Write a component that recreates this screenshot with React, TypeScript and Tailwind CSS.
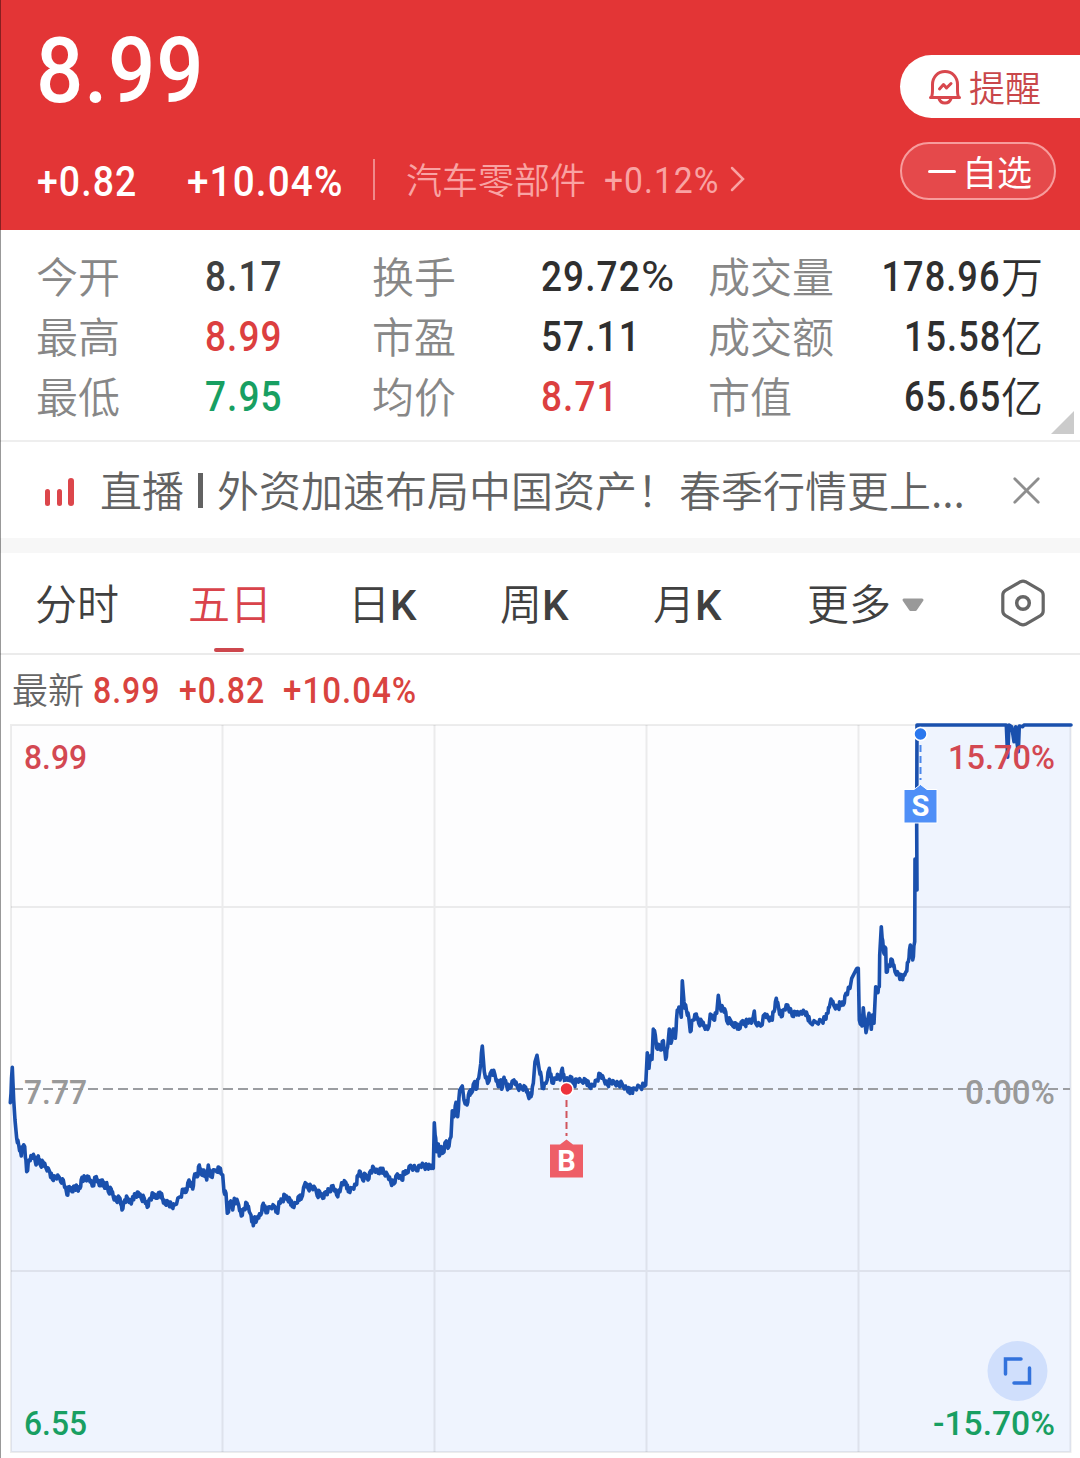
import { X } from "lucide-react";

const stats = [
  { label: "今开", value: "8.17", color: "text-[#404040]" },
  { label: "换手", value: "29.72", percent: true, color: "text-[#2f2f2f]" },
  { label: "成交量", value: "178.96", unit: "万", color: "text-[#2f2f2f]" },
  { label: "最高", value: "8.99", color: "text-[#dc3f3f]" },
  { label: "市盈", value: "57.11", color: "text-[#2f2f2f]" },
  { label: "成交额", value: "15.58", unit: "亿", color: "text-[#2f2f2f]" },
  { label: "最低", value: "7.95", color: "text-[#189f62]" },
  { label: "均价", value: "8.71", color: "text-[#dc3f3f]" },
  { label: "市值", value: "65.65", unit: "亿", color: "text-[#2f2f2f]" },
];

const tabs = [
  { name: "分时", width: "w-[153px]" },
  { name: "五日", width: "w-[160px]", active: true },
  { name: "日", k: true, width: "w-[152px]" },
  { name: "周", k: true, width: "w-[153px]" },
  { name: "月", k: true, width: "w-[154px]" },
];

// every part is sampled on a grid of 1/3 px, counted from its own origin
const parts = [
  {
    x: 0,
    y: 1050,
    points:
      "31,158 37,52 41,150 45,210 50,265 56,285 64,318 66,290 74,290 80,365 88,330 96,318 103,320 108,345 115,318 121,345 130,337 137,352 149,365 157,388 166,380 178,382 182,395 190,390 201,435 208,410 216,425 224,408 232,418 240,415 246,382 256,390 266,380 277,408 289,380 298,407 307,390 314,415 320,398 325,425 334,418 340,440 347,450 360,445 366,480 374,450 383,445 394,462 398,440 407,440 415,427 424,445 433,445 442,472 450,445 461,432 468,445 480,427 488,448 495,462 505,455 516,472 524,465 540,440 552,418 558,427 567,390 578,417 584,372 592,380 598,345 605,375 612,360 620,390 625,345 632,380 645,360 650,365 657,352 664,372",
  },
  {
    x: 220,
    y: 1040,
    points:
      "8,405 12,455 18,460 22,520 32,483 38,510 43,475 56,495 64,528 72,505 81,490 88,515 93,525 100,557 104,530 108,547 113,530 122,525 130,490 138,518 150,500 165,500 173,520 177,485 187,482 195,465 203,480 210,478 217,500 230,490 237,468 243,478 256,428 264,445 274,440 287,448 292,468 299,455 308,475 318,455 328,455 339,437 350,465 360,455 365,428 378,428 385,455 398,445 408,435 414,405 421,395 428,420 436,402 444,420 452,392 462,385 475,400 484,385 492,400 503,405 512,425 521,432 532,402 546,420 552,395 560,400 572,376 590,392 600,376 612,376 622,384 630,376 640,385 643,248 650,335 655,312 658,348 664,320 668,340 679,303 684,325 693,290 697,212 702,230 708,187 713,230 719,150",
  },
  {
    x: 430,
    y: 1030,
    points:
      "97,168 102,210 111,225 118,185 124,190 134,155 138,178 146,145 150,118 157,48 163,125 173,160 185,122 195,135 205,170 212,150 215,178 222,142 230,168 238,175 252,150 262,170 275,175 287,172 294,195 303,200 310,160 315,95 321,76 328,120 334,140 337,175 348,160 358,115 366,158 378,145 385,135 390,150 397,115 404,155 415,150 425,142 432,168 440,148 455,155 468,150 478,170 490,168 500,150 511,132 522,150 533,165 541,152 555,162 565,160 578,165 592,180 598,178 604,188 614,175 630,170 644,168",
  },
  {
    x: 630,
    y: 960,
    points:
      "47,375 52,278 57,325 60,288 66,298 70,207 76,225 80,265 88,255 92,270 100,242 107,298 113,260 118,207 123,250 130,207 136,235 142,150 150,145 154,172 157,62 162,125 170,155 176,170 181,215 188,180 199,162 206,190 216,185 222,198 233,208 237,198 241,162 250,178 260,160 265,106 270,142 280,148 287,155 290,182 302,182 308,198 320,192 326,208 338,182 345,195 352,182 362,185 368,180 373,153 376,188 392,198 405,162 415,175 424,180 432,155 439,115 446,145 454,170 462,148 473,135 487,168 497,155 507,165 512,155 525,158 532,165 540,188 560,188 575,182 586,178 592,160 598,142 603,117 612,138 625,145 631,128 640,135 648,100 660,85 665,55 680,26",
  },
  {
    x: 840,
    y: 710,
    points:
      "52,775 55,775 58,930 66,948 70,893 78,968 87,910 94,958 97,915 102,940 107,830 112,848 118,830 119,735 124,650 131,728 137,715 139,787 147,765 157,750 165,785 177,795 185,807 194,795 198,785 205,755 211,705 218,750 224,695 225,447 231,540 230,350 231,45 499,45 503,142 507,45 515,50 522,95 527,50 530,92 535,125 538,48 548,50 552,45 693,45",
  },
];

// short segments get a small tick up and down, as the minute prices do
const withTicks = (points: number[][]) =>
  points.flatMap(([x, y], i) => {
    const next = points[i + 1];
    if (!next) return [[x, y]];
    const dx = next[0] - x;
    const dy = next[1] - y;
    if (dx < 6 || dx > 20 || y < 100) return [[x, y]];
    const size = i % 3 === 0 ? 9 : 6;
    return [
      [x, y],
      [x + dx * 0.35, y + dy * 0.35 + size],
      [x + dx * 0.6, y + dy * 0.6 - size],
    ];
  });

const line = parts
  .flatMap((part) =>
    withTicks(part.points.split(" ").map((point) => point.split(",").map(Number))).map(
      ([x, y]) => `${(part.x + x / 3).toFixed(1)},${(part.y + y / 3).toFixed(1)}`
    )
  )
  .join(" ");

const Num = ({ children, className = "" }: { children: string; className?: string }) => (
  <span
    className={`inline-block whitespace-nowrap font-['Roboto',sans-serif] font-medium ${className}`}
  >
    {children}
  </span>
);

const BellIcon = () => (
  <svg width="34" height="36" viewBox="0 0 34 36" fill="none" stroke="#d8474d" strokeWidth="3" strokeLinecap="round" strokeLinejoin="round">
    <path d="M2.500 28.500h29M3.500 28C4.500 26 4.500 24 4.500 20v-4.500C4.500 8 9.800 2.500 17 2.500S29.500 8 29.500 15.500V20c0 4 0 6 1 8" />
    <path d="M11 29.500c1 3.500 3.500 4.500 6 4.500s5-1 6-4.500" />
    <path d="M11.500 20l4-4.500 3 3.500 4.500-4.500" />
  </svg>
);

const Header = () => (
  <header className="h-[230px] bg-[#e33536] flex justify-between text-white">
    <div className="pl-[37px] flex flex-col">
      <div className="h-[134px] pt-[18px]">
        <Num className="origin-left -ml-px text-[91px] leading-[107px] tracking-[0.01em] scale-x-[0.915]">8.99</Num>
      </div>
      <div className="h-[94px] flex items-center">
        <Num className="w-[150px] pt-[2px] origin-left text-[42px] tracking-[0.03em] scale-x-[0.89]">+0.82</Num>
        <Num className="w-[186px] pt-[2px] origin-left text-[42px] tracking-[0.03em] scale-x-[0.92]">+10.04%</Num>
        <div className="w-[2px] h-[41px] bg-[#f08a8a] -mt-[4px]" />
        <div className="flex items-center pl-[31px] -mt-[4px] text-[#f9a3a3]">
          <span className="text-[36px] w-[198px] font-[350] -mt-[2px]">汽车零部件</span>
          <Num className="w-[126px] pt-[3px] origin-left text-[37px] tracking-[0.03em] scale-x-[0.91] !font-normal">+0.12%</Num>
          <svg width="16" height="26" viewBox="0 0 16 26" fill="none" stroke="currentColor" strokeWidth="2.500" strokeLinecap="round">
            <path d="M2 2l11 11L2 24" />
          </svg>
        </div>
      </div>
    </div>
    <div className="w-[180px] pt-[55px] flex flex-col gap-[24px] text-[36px]">
      <div className="h-[63px] bg-white rounded-l-full flex items-center pl-[28px] gap-[7px] text-[#c9474a]">
        <BellIcon />
        <span className="pb-[2px] font-[350]">提醒</span>
      </div>
      <div className="w-[156px] h-[58px] rounded-full border-2 border-[#f79c9c] bg-[#e5494b] flex items-center pl-[26px] gap-[6px]">
        <span className="w-[28px] h-[3px] rounded bg-white" />
        <span className="text-[35px] pb-[2px]">自选</span>
      </div>
    </div>
  </header>
);

const Stats = () => (
  <section className="relative h-[212px] pt-[16px] pl-[36px] pr-[37px] border-b-2 border-[#eeeeee] grid grid-cols-[168px_168px_168px_168px_335px] auto-rows-[60px] text-[42px]">
    {stats.map((item) =>
      item.unit ? (
        <div key={item.label} className="flex justify-between items-center">
          <span className="pb-[3px] font-[350] text-[#878787]">{item.label}</span>
          <span className={`flex items-center ${item.color}`}>
            <Num className="origin-right pt-[2px] tracking-[0.03em] scale-x-[0.86]">{item.value}</Num>
            <span className="pb-[3px] font-[350]">{item.unit}</span>
          </span>
        </div>
      ) : (
        <div key={item.label} className="col-span-2 flex items-center">
          <span className="w-[169px] pb-[3px] font-[350] text-[#878787]">{item.label}</span>
          <span className={`flex items-center ${item.color}`}>
            <Num className={`origin-left pt-[2px] tracking-[0.03em] scale-x-[0.88] ${item.percent ? "w-[100px]" : ""}`}>
              {item.value}
            </Num>
            {item.percent && <Num className="pt-[2px] origin-left scale-x-[1.08] scale-y-[1.02] !font-normal">%</Num>}
          </span>
        </div>
      )
    )}
    <svg className="absolute right-[6px] bottom-[6px]" width="23" height="23">
      <path d="M23 0V23H0Z" fill="#cbcbcb" />
    </svg>
  </section>
);

const News = () => (
  <section className="h-[96px] flex items-center pl-[45px] text-[42px] text-[#626262]">
    <div className="w-[55px] h-[29px] mt-[2px] flex items-end gap-[6px]">
      <span className="w-[5px] h-[17px] rounded-sm bg-[#dc464b]" />
      <span className="w-[5px] h-[17px] ml-[1px] rounded-sm bg-[#dc464b]" />
      <span className="w-[6px] h-[28px] rounded-sm bg-[#dc464b]" />
    </div>
    <span className="pb-[2px] font-[350]">直播</span>
    <span className="w-[5px] h-[35px] ml-[14px] mr-[14px] bg-[#626262]" />
    <span className="w-[795px] pb-[2px] whitespace-nowrap font-[350]">外资加速布局中国资产！春季行情更上...</span>
    <X size={47} strokeWidth={1.400} color="#8e8e8e" className="-ml-[9px]" />
  </section>
);

const Tabs = () => (
  <nav className="h-[102px] border-b-2 border-[#ebebeb] flex items-center pl-[35px] text-[42px] text-[#404040]">
    {tabs.map((tab) => (
      <div key={tab.name} className={`relative h-full flex items-center ${tab.width} ${tab.active ? "text-[#d9434b]" : ""}`}>
        <span className="pb-[2px] font-[350]">{tab.name}</span>
        {tab.k && <span className="pt-[5px] font-['Roboto',sans-serif] font-medium">K</span>}
        {tab.active && <span className="absolute left-[26px] bottom-[1px] w-[30px] h-[4px] rounded-full bg-[#cd474d]" />}
      </div>
    ))}
    <span className="w-[94px] pb-[2px] font-[350]">更多</span>
    <svg className="mt-[3px]" width="24" height="16" viewBox="0 0 24 16" fill="#999" stroke="#999" strokeWidth="3" strokeLinejoin="round">
      <path d="M3 3H21L14.500 12.500H9.500Z" />
    </svg>
    <svg className="ml-[74px]" width="48" height="48" viewBox="0 0 48 48" fill="none" stroke="#666" strokeWidth="3.200" strokeLinejoin="round">
      <path d="M21.500 2.700Q24 1.600 26.500 2.700L41.500 11.400Q44.200 13 44.200 16V32Q44.200 35 41.500 36.600L26.500 45.300Q24 46.400 21.500 45.300L6.500 36.600Q3.800 35 3.800 32V16Q3.800 13 6.500 11.400Z" />
      <circle cx="24" cy="24" r="6.300" strokeWidth="3.500" />
    </svg>
  </nav>
);

const Latest = () => (
  <div className="h-[69px] flex items-center pl-[12px] text-[36px] text-[#666666]">
    <span className="w-[81px] pb-[3px] font-[350]">最新</span>
    <Num className="origin-left w-[86px] pt-[2px] tracking-[0.03em] scale-x-[0.89] text-[#d9433f]">8.99</Num>
    <Num className="origin-left w-[104px] pt-[2px] tracking-[0.03em] scale-x-[0.89] text-[#d9433f]">+0.82</Num>
    <Num className="origin-left pt-[2px] tracking-[0.03em] scale-x-[0.92] text-[#d9433f]">+10.04%</Num>
  </div>
);

const Chart = () => (
  <svg
    className="block font-['Roboto',sans-serif]"
    width="1080"
    height="734"
    viewBox="0 724 1080 734"
    overflow="visible"
  >
    <rect x="11" y="725" width="1060" height="727" fill="#fdfdfe" />
    <polygon points={`${line} 1071,1452 11,1452`} fill="#eff4fe" />
    <g stroke="#000" strokeOpacity="0.07" strokeWidth="2">
      <rect x="11" y="725" width="1059.500" height="727" fill="none" />
      <path d="M222.500 725V1452M434.500 725V1452M646.500 725V1452M858.500 725V1452M11 907H1070M11 1271H1070" />
    </g>
    <path d="M14 1089H1070" stroke="#9b9da1" strokeWidth="2" strokeDasharray="10 5" strokeDashoffset="1" />
    <polyline points={line} fill="none" stroke="#1a50ad" strokeWidth="3.600" strokeLinejoin="round" strokeLinecap="round" />

    <g fontSize="33" fontWeight="500">
      <text x="24" y="769" fill="#d34852" textLength="63" lengthAdjust="spacingAndGlyphs">8.99</text>
      <text x="948" y="769" fill="#d34852" textLength="107" lengthAdjust="spacingAndGlyphs">15.70%</text>
      <text x="24" y="1104" fill="#999" textLength="63" lengthAdjust="spacingAndGlyphs">7.77</text>
      <text x="965" y="1104" fill="#999" textLength="90" lengthAdjust="spacingAndGlyphs">0.00%</text>
      <text x="24" y="1435" fill="#189f62" textLength="63" lengthAdjust="spacingAndGlyphs">6.55</text>
      <text x="933" y="1435" fill="#189f62" textLength="122" lengthAdjust="spacingAndGlyphs">-15.70%</text>
    </g>

    <path d="M566.500 1100V1136" stroke="#d0545c" strokeWidth="2" strokeDasharray="7 4" />
    <circle cx="566.500" cy="1089" r="6.500" fill="#ee333c" stroke="#fff" strokeWidth="1.500" />
    <path d="M550 1144.500H560L566.500 1139.500L573 1144.500H583V1177.500H550Z" fill="#ee5e67" />
    <text x="566.500" y="1171" fontSize="29" fontWeight="700" fill="#fff" textAnchor="middle">B</text>

    <path d="M920.500 745V780" stroke="#4a86ea" strokeWidth="2" strokeDasharray="7 4" />
    <circle cx="920.500" cy="734" r="6.500" fill="#2b78ee" stroke="#fff" strokeWidth="1.500" />
    <path d="M904 789.500H914L920.500 784.500L927 789.500H937V823H904Z" fill="#4f8ff7" stroke="#fff" strokeWidth="1" />
    <text x="920.500" y="816" fontSize="29" fontWeight="700" fill="#fff" textAnchor="middle">S</text>

    <circle cx="1017.500" cy="1371" r="30" fill="#d0dffc" />
    <path d="M1005.500 1374V1359H1021M1029.500 1368V1383H1014" fill="none" stroke="#3272dc" strokeWidth="3.500" strokeLinecap="round" />
  </svg>
);

const App = () => {
  return (
    <main
      lang="zh-CN"
      className="relative w-[1080px] h-[1458px] overflow-hidden bg-white font-['Noto_Sans_CJK_SC',sans-serif] leading-none"
    >
      <Header />
      <Stats />
      <News />
      <div className="h-[15px] bg-[#f7f7f7]" />
      <Tabs />
      <Latest />
      <Chart />
      <div className="absolute left-0 top-0 w-px h-full bg-black/40" />
    </main>
  );
};

export default App;
